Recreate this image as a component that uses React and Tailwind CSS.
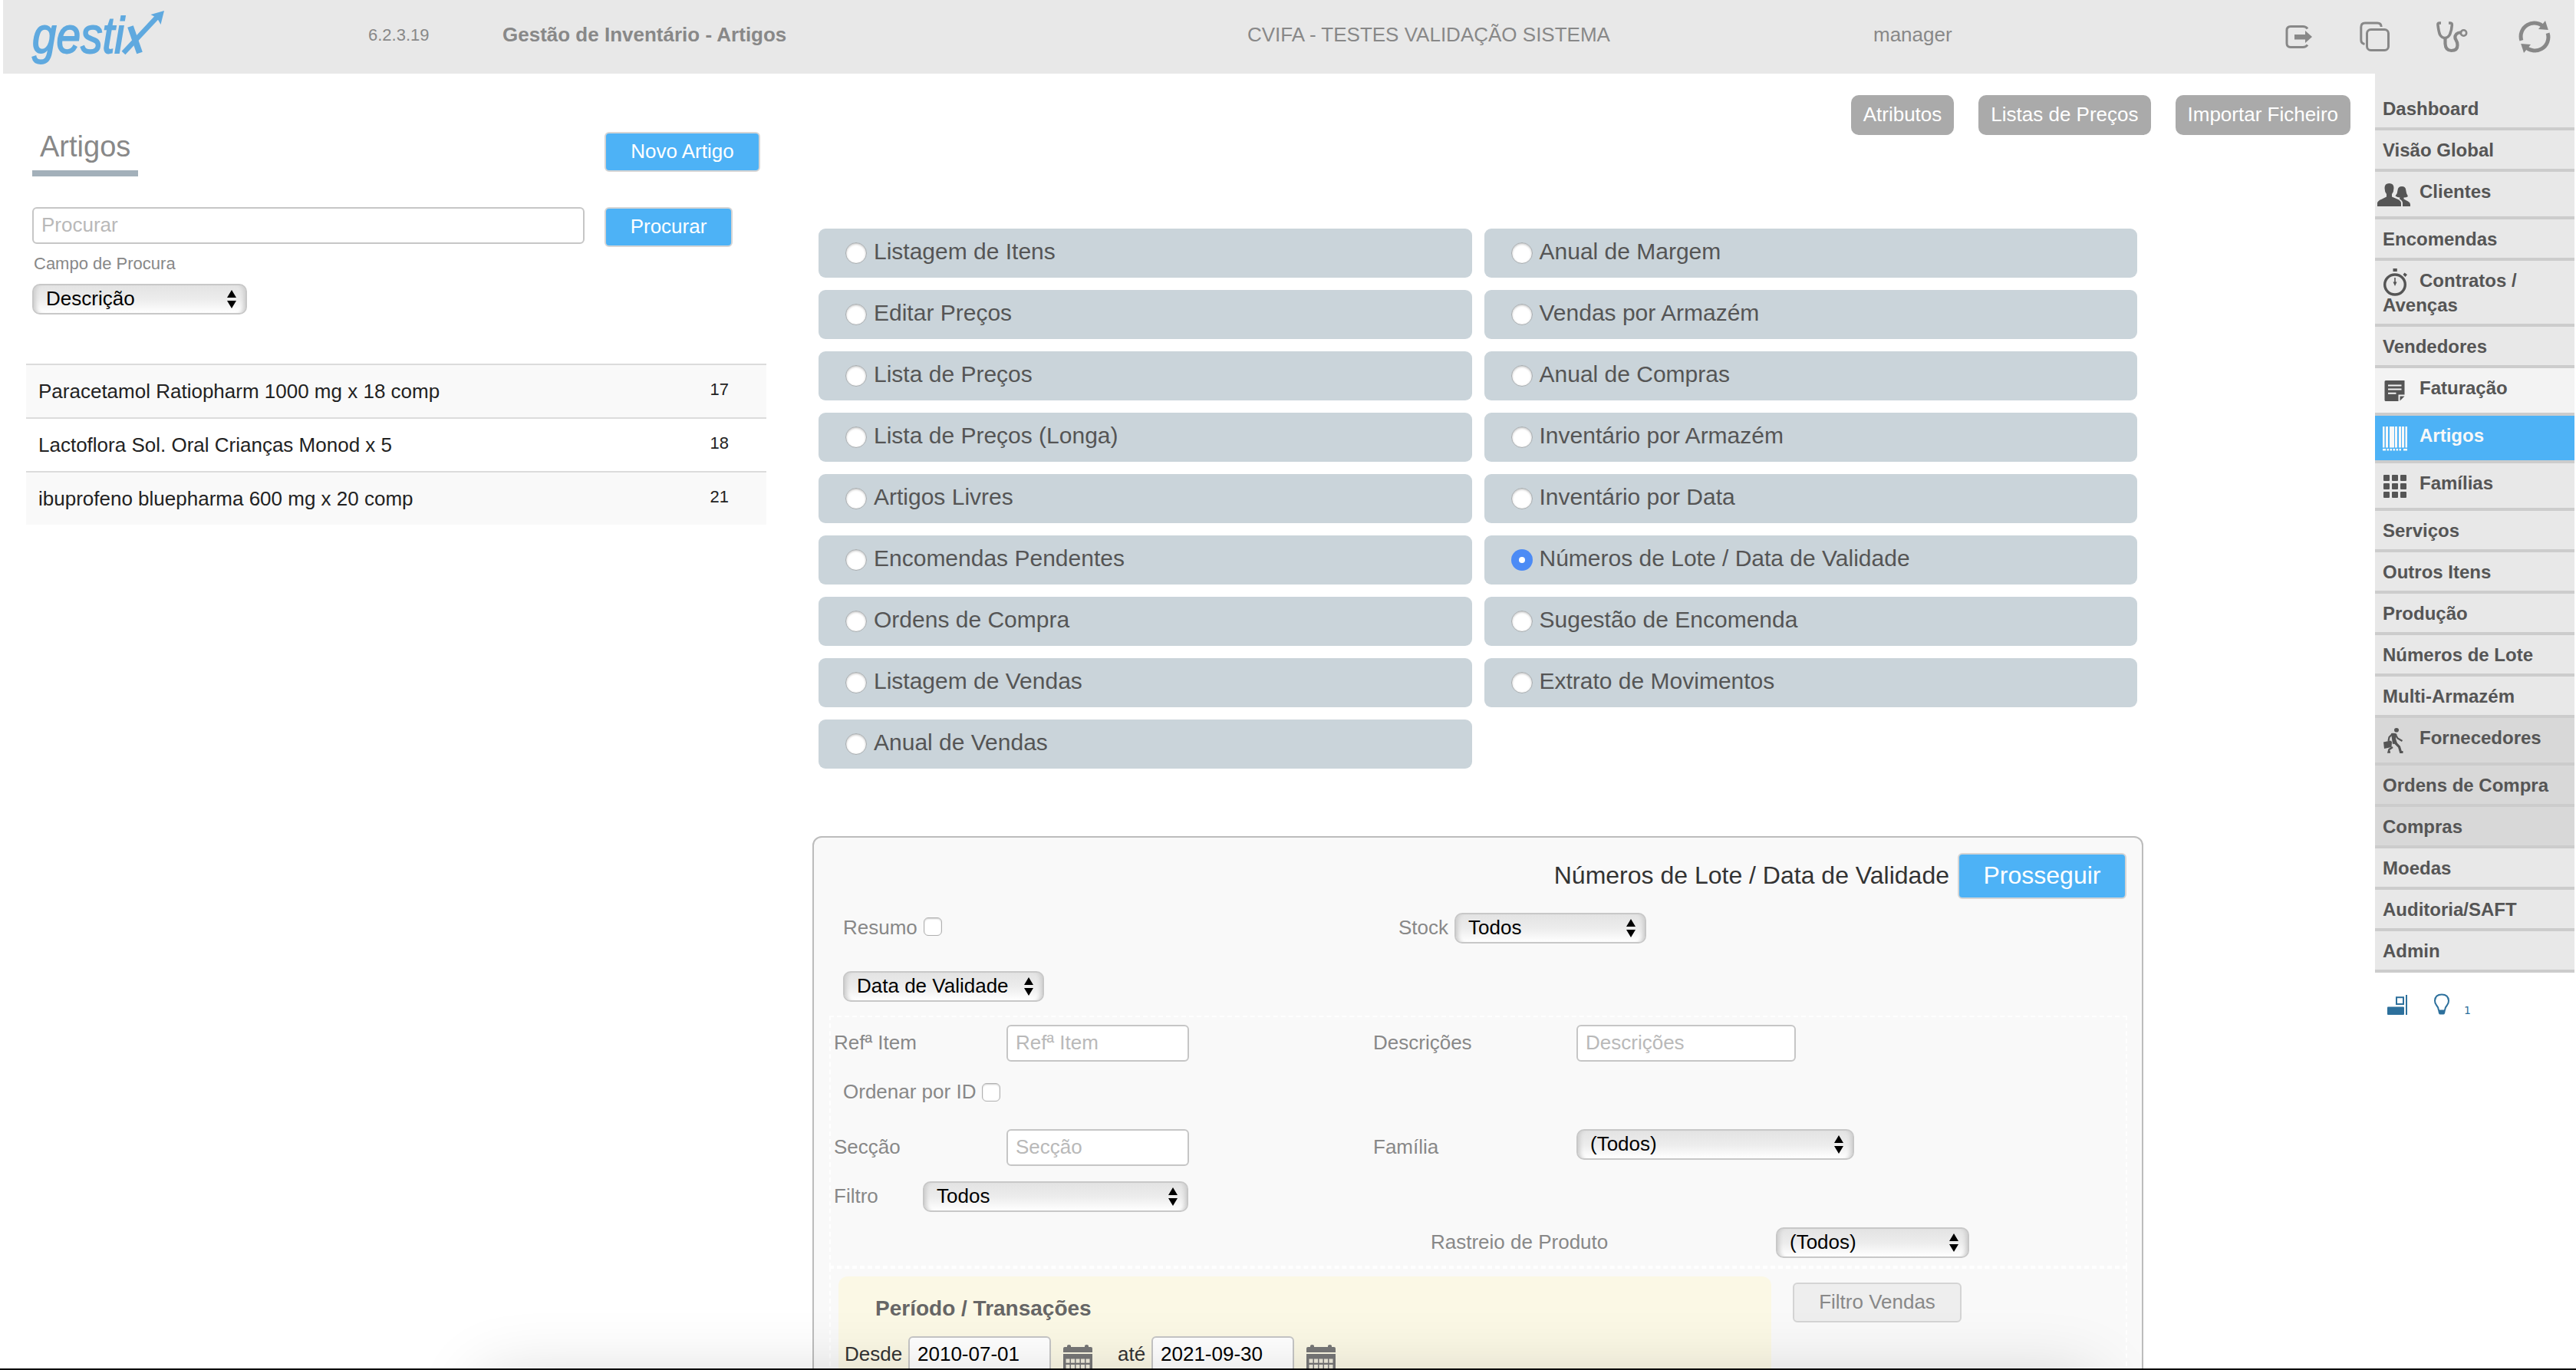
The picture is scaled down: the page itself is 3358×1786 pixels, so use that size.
import React, { useState } from "react";
import clsx from "clsx";

const leftReports = [
  "Listagem de Itens",
  "Editar Preços",
  "Lista de Preços",
  "Lista de Preços (Longa)",
  "Artigos Livres",
  "Encomendas Pendentes",
  "Ordens de Compra",
  "Listagem de Vendas",
  "Anual de Vendas",
];

const rightReports = [
  "Anual de Margem",
  "Vendas por Armazém",
  "Anual de Compras",
  "Inventário por Armazém",
  "Inventário por Data",
  "Números de Lote / Data de Validade",
  "Sugestão de Encomenda",
  "Extrato de Movimentos",
];

const articles = [
  { id: 17, name: "Paracetamol Ratiopharm 1000 mg x 18 comp" },
  { id: 18, name: "Lactoflora Sol. Oral Crianças Monod x 5" },
  { id: 21, name: "ibuprofeno bluepharma 600 mg x 20 comp" },
];

/* ---------- icons ---------- */

const Logo = () => (
  <svg width="196" height="96" viewBox="0 0 196 96" className="text-[#5fa9df]">
    <text
      transform="translate(18 69) scale(0.86 1)"
      fontFamily="'Liberation Sans', Arial, sans-serif"
      fontStyle="italic"
      fontSize="66"
      fill="currentColor"
      stroke="currentColor"
      strokeWidth="1.8"
    >
      gesti
    </text>
    <path d="M146 34.500L158 69" stroke="currentColor" strokeWidth="8" />
    <path d="M137 69L181 22" stroke="currentColor" strokeWidth="6.500" />
    <path d="M190 14L172.500 19L178 22L182.500 26.500L185.500 32Z" fill="currentColor" />
  </svg>
);

const LogoutIcon = () => (
  <svg width="36" height="32" viewBox="0 0 36 32" fill="none">
    <path
      d="M30 5.500Q28 2.500 24 2.500H8Q3 2.500 3 7.500V24.500Q3 29.500 8 29.500H24Q28 29.500 30 26.500"
      stroke="currentColor"
      strokeWidth="3"
    />
    <path d="M13 13H27V8L36 16L27 24V19.500H13Z" fill="currentColor" />
  </svg>
);

const CopyIcon = () => (
  <svg width="40" height="40" viewBox="0 0 40 40" fill="none" stroke="currentColor" strokeWidth="3">
    <path d="M6.500 29.500Q1.800 28.500 1.800 24V7.500Q1.800 2 7 2H23Q28 2 28.200 7" />
    <rect x="9.500" y="10.500" width="28" height="27" rx="5" />
  </svg>
);

const StethoscopeIcon = () => (
  <svg width="42" height="42" viewBox="0 0 42 42" fill="none" stroke="currentColor">
    <path
      d="M7 3H4.500Q2.500 3 3 6Q4 14 5.500 18Q8 22.500 12 22.500Q16 22.500 18.500 18Q21 12 21.300 6Q21.500 3 19.500 3H17"
      strokeWidth="3.600"
    />
    <path
      d="M12.500 22V30Q13 39 20.500 39Q28.500 39 28.500 32Q28.500 28 26.500 25Q24 21 27 17.500Q30 14.500 34 16"
      strokeWidth="4.200"
    />
    <circle cx="36.500" cy="16" r="3.700" strokeWidth="2.600" />
  </svg>
);

const RefreshIcon = () => (
  <svg width="42" height="42" viewBox="0 0 42 42" fill="none">
    <path d="M3.900 25.800A17.500 17.500 0 0 1 33.500 8.700" stroke="currentColor" strokeWidth="5" />
    <path d="M35 0L38.800 12L26 11Z" fill="currentColor" />
    <path d="M38.100 16.200A17.500 17.500 0 0 1 8.500 33.300" stroke="currentColor" strokeWidth="5" />
    <path d="M7 42L3.200 30L16 31Z" fill="currentColor" />
  </svg>
);

const PeopleIcon = () => (
  <svg width="43" height="30" viewBox="0 0 43 30" fill="currentColor">
    <path d="M0 30V25.500Q1 22.500 5 21L12 17.500V14Q9.500 11 9.500 6Q9.500 0 15.500 0Q21.500 0 21.500 6Q21.500 11 19 14V17.500L26 20.500Q31 22.500 31 26V30Z" />
    <path d="M33 30V26Q33 22.500 29 20.500L29.500 18.500Q26 18.500 23.500 16.500Q26.500 13 26.500 9Q27 4 32 4Q37 4 37.300 9Q37.500 13 40 17Q38 18.500 34.500 18.500V20.500L40 23.500Q43 25 43 27.500V30Z" />
  </svg>
);

const StopwatchIcon = () => (
  <svg width="34" height="37" viewBox="0 0 34 37" fill="none">
    <ellipse cx="16" cy="21" rx="13.300" ry="13" stroke="currentColor" strokeWidth="3.400" />
    <path d="M13.500 0H18.800V4H13.500ZM28.500 5.500L32 8L29.500 11L26.500 8Z" fill="currentColor" />
    <path d="M15.200 12H16.800V17.500H18.500L16 23L13.500 17.500H15.200Z" fill="currentColor" />
  </svg>
);

const NoteIcon = () => (
  <svg width="28" height="28" viewBox="0 0 28 28">
    <path
      fillRule="evenodd"
      fill="currentColor"
      d="M2 0H26.500V18.500H18.500V27H2Q.5 27 .5 25.500V1.500Q.5 0 2 0ZM5 5.500V7.500H22.500V5.500ZM5 10.500V12.500H22.500V10.500ZM5 15.800V17.800H15.500V15.800ZM20.500 20.500H26.500L20.500 26.500Z"
    />
  </svg>
);

const BarcodeIcon = () => (
  <svg width="32" height="32" viewBox="0 0 32 32" fill="currentColor">
    <path d="M0 0H2.500V27.500H0ZM4 0H7V27.500H4ZM9 0H15V27.500H9ZM16 0H19V27.500H16ZM21 0H24V27.500H21ZM25 0H28V27.500H25ZM29.500 0H32V27.500H29.500Z" />
    <path d="M0 29H4V31.500H0ZM5.500 29H8V31.500H5.500ZM9.500 29H12V31.500H9.500ZM13.500 29H16V31.500H13.500ZM17.500 29H20V31.500H17.500ZM21.500 29H24V31.500H21.500ZM27 29H32V31.500H27Z" />
  </svg>
);

const GridIcon = () => (
  <svg width="30" height="30" viewBox="0 0 30 30" fill="currentColor">
    {[0, 11, 22].map((y) =>
      [0, 11, 22].map((x) => <rect key={`${x}-${y}`} x={x} y={y} width="8" height="8" rx="1" />)
    )}
  </svg>
);

const CarrierIcon = () => (
  <svg width="26" height="33" viewBox="0 0 26 33" fill="none" stroke="currentColor">
    <ellipse cx="17" cy="2.800" rx="3" ry="2.800" fill="currentColor" stroke="none" />
    <path d="M0 18.500L9 16.500L11 18L10.500 25L1 27Z" fill="currentColor" stroke="none" />
    <path d="M10 7Q15 6 17.500 8L16 14L18 20L12 21L11 14Z" fill="currentColor" stroke="none" />
    <path d="M12 7.500L7.500 12L6.500 17" strokeWidth="2.200" />
    <path d="M16 9L18.500 13.500L24.500 17" strokeWidth="2.200" />
    <path d="M14.500 18.500L20.500 24.500L22.500 31.500H25.500" strokeWidth="3.200" />
    <path d="M12 25L7.500 28L6.500 31.500H9" strokeWidth="2.400" />
  </svg>
);

const RegisterIcon = () => (
  <svg width="26" height="26" viewBox="0 0 26 26" fill="currentColor">
    <rect x="0" y="15.500" width="22" height="10.500" rx="1" />
    <rect x="12" y="3.200" width="9" height="8.800" fill="none" stroke="currentColor" strokeWidth="2" />
    <rect x="24" y="0" width="2" height="26" />
  </svg>
);

const BulbIcon = () => (
  <svg width="22" height="28" viewBox="0 0 22 28">
    <path
      d="M7 22Q6.500 18 3.800 15Q2 12.500 2 9.500Q2.500 1.500 11 1.500Q19.500 1.500 20 9.500Q20 12.500 18.200 15Q15.500 18 15 22"
      fill="none"
      stroke="currentColor"
      strokeWidth="2"
    />
    <path d="M6 21.500H16L15 26Q14.500 27.500 13 27.500H9Q7.500 27.500 7 26Z" fill="currentColor" />
  </svg>
);

const CalendarIcon = () => (
  <svg width="38" height="38" viewBox="0 0 38 38">
    <path
      fill="currentColor"
      d="M0 10V5Q0 3 2 3H5V1.500Q5 0 7.500 0Q10 0 10 1.500V3H28V1.500Q28 0 30.500 0Q33 0 33 1.500V3H36Q38 3 38 5V10Z"
    />
    <path fill="currentColor" d="M0 12H38V38H0Z" />
    <g fill="#efecdc">
      {[18.5, 26, 33].map((y) =>
        [3.5, 10, 16.5, 23, 29.5].map((x) => (
          <rect key={`${x}-${y}`} x={x} y={y} width="5" height="5.200" />
        ))
      )}
    </g>
  </svg>
);

/* ---------- controls ---------- */

const Button = ({ children, className }) => (
  <button
    className={clsx(
      "shrink-0 rounded-md border-2 border-[#d5d5d5] bg-[#4db2f6] text-white whitespace-nowrap",
      className
    )}
  >
    {children}
  </button>
);

const ToolbarButton = ({ children }) => (
  <button className="h-[52px] px-4 pb-0.5 rounded-[10px] bg-[#aaaaaa] text-white text-[26px] whitespace-nowrap">
    {children}
  </button>
);

const Select = ({ value, className }) => (
  <div
    className={clsx(
      "shrink-0 h-10 flex items-center justify-between pl-4 pr-3 pb-px rounded-[10px] border-2 border-[#c8c8c8] bg-linear-to-b from-[#e3e3e3] via-[#ececec] to-white shadow-[inset_7px_0_5px_-4px_#cfcfcf,inset_-7px_0_5px_-4px_#cfcfcf] text-[26px] leading-[30px] text-black whitespace-nowrap",
      className
    )}
  >
    <span className="-mt-px">{value}</span>
    <svg width="12" height="24" viewBox="0 0 12 24">
      <path d="M6 0L12 10H0ZM6 24L0 14H12Z" />
    </svg>
  </div>
);

const Input = ({ className, ...rest }) => (
  <input
    type="text"
    className={clsx(
      "shrink-0 h-12 px-2.5 pb-0.5 rounded-md border-2 border-[#c6c6c6] bg-white text-[26px] text-black placeholder:text-[#b9b9b9]",
      className
    )}
    {...rest}
  />
);

const Label = ({ children, className }) => (
  <span className={clsx("shrink-0 text-[26px] leading-[30px] whitespace-nowrap", className)}>
    {children}
  </span>
);

const Checkbox = () => (
  <span className="shrink-0 size-6 rounded-[6px] border border-[#b0b0b0] bg-white shadow-[inset_0_1px_2px_#ccc]" />
);

const ReportOption = ({ label, checked, onSelect }) => (
  <div
    onClick={onSelect}
    className="h-16 flex items-start gap-[9px] pl-[35px] rounded-[9px] bg-[#cad4da] cursor-pointer"
  >
    <span
      className={clsx(
        "mt-[18px] size-7 rounded-full flex items-center justify-center",
        checked ? "bg-[#4c8bf5]" : "bg-white border border-[#a8adb0] shadow-[inset_0_1px_3px_#bbb]"
      )}
    >
      {checked && <span className="size-2 rounded-full bg-white" />}
    </span>
    <span className="mt-[13px] text-[30px] leading-[34px] text-[#555]">{label}</span>
  </div>
);

/* ---------- sidebar ---------- */

const menu = [
  { label: "Dashboard" },
  { label: "Visão Global" },
  { label: "Clientes", icon: <PeopleIcon />, iconClass: "-ml-[7px] mr-[12px] mt-[5px]" },
  { label: "Encomendas" },
  { label: "Contratos / Avenças", icon: <StopwatchIcon />, iconClass: "mr-[14px]" },
  { label: "Vendedores" },
  { label: "Faturação", icon: <NoteIcon />, iconClass: "ml-0.5 mr-[18px] mt-1.5", tone: "light" },
  { label: "Artigos", icon: <BarcodeIcon />, iconClass: "mr-4 mt-1", tone: "active" },
  { label: "Famílias", icon: <GridIcon />, iconClass: "ml-px mr-[17px] mt-[5px]" },
  { label: "Serviços" },
  { label: "Outros Itens" },
  { label: "Produção" },
  { label: "Números de Lote" },
  { label: "Multi-Armazém" },
  { label: "Fornecedores", icon: <CarrierIcon />, iconClass: "ml-px mr-[21px] mt-[3px]", tone: "dark" },
  { label: "Ordens de Compra", tone: "dark" },
  { label: "Compras", tone: "dark" },
  { label: "Moedas" },
  { label: "Auditoria/SAFT" },
  { label: "Admin" },
];

const MenuItem = ({ item }) => (
  <a
    className={clsx(
      "block pt-2.5 px-2.5 border-b-4 border-[#cccccc] text-2xl leading-8 font-bold",
      item.icon ? "min-h-[62px] pb-2" : "h-[54px]",
      item.tone === "active" && "bg-[#4db2f6] text-[#f8f8f8]",
      item.tone === "light" && "bg-[#f3f3f3] text-[#555]",
      item.tone === "dark" && "bg-[#d8d8d8] text-[#555]",
      !item.tone && "bg-[#e8e8e8] text-[#555]"
    )}
  >
    {item.icon && (
      <span className={clsx("inline-block h-8 align-top overflow-visible", item.iconClass)}>
        {item.icon}
      </span>
    )}
    {item.label}
  </a>
);

const Sidebar = () => (
  <nav className="w-[260px] shrink-0">
    <div className="h-5 bg-[#e8e8e8]" />
    {menu.map((item) => (
      <MenuItem key={item.label} item={item} />
    ))}
    <div className="flex items-end pt-[27px] pl-4 text-[#2d709c]">
      <RegisterIcon />
      <span className="ml-[34px]">
        <BulbIcon />
      </span>
      <span className="ml-[18px] font-['DejaVu_Sans',sans-serif] text-[14px] leading-3">1</span>
    </div>
  </nav>
);

/* ---------- page parts ---------- */

const Header = () => (
  <header className="h-24 ml-1 mr-0.5 flex bg-[#e8e8e8] text-[#888]">
    <div className="w-[476px] pl-[20px]">
      <Logo />
    </div>
    <span className="w-[175px] mt-[33px] text-[22px] leading-[26px]">6.2.3.19</span>
    <span className="w-[971px] mt-[30px] text-[26px] leading-[30px] font-bold">
      Gestão de Inventário - Artigos
    </span>
    <span className="w-[816px] mt-[30px] text-[26px] leading-[30px]">
      CVIFA - TESTES VALIDAÇÃO SISTEMA
    </span>
    <span className="w-[536px] mt-[30px] text-[26px] leading-[30px]">manager</span>
    <div className="flex items-center">
      <span className="mr-[62px]">
        <LogoutIcon />
      </span>
      <span className="mr-[59px]">
        <CopyIcon />
      </span>
      <span className="mr-[66px]">
        <StethoscopeIcon />
      </span>
      <RefreshIcon />
    </div>
  </header>
);

const ArticlesPanel = () => (
  <section className="w-[1059px] shrink-0">
    <div className="flex pl-[42px] pt-[73px]">
      <h1 className="w-[138px] h-[61px] pl-2.5 border-b-8 border-[#a3b0ba] text-[38px] leading-[44px] text-[#888]">
        Artigos
      </h1>
      <Button className="ml-[608px] mt-[3px] w-[203px] h-[52px] pb-0.5 text-[26px]">
        Novo Artigo
      </Button>
    </div>
    <div className="flex pl-[42px] mt-10 gap-[26px]">
      <Input placeholder="Procurar" className="w-[720px]" />
      <Button className="w-[167px] h-[52px] pb-0.5 text-[26px]">Procurar</Button>
    </div>
    <p className="pl-11 mt-[9px] text-[22px] leading-[26px] text-[#888]">Campo de Procura</p>
    <Select value="Descrição" className="ml-[42px] mt-[13px] w-[280px]" />
    <div className="ml-[34px] mt-16 w-[965px]">
      {articles.map((article) => (
        <div
          key={article.id}
          className="h-[70px] flex items-center justify-between pl-4 pr-[49px] border-t-2 border-[#dcdcdc] odd:bg-[#f9f9f9] text-[#222]"
        >
          <span className="text-[26px] leading-[30px]">{article.name}</span>
          <span className="pb-[5px] text-[22px] leading-[26px]">{article.id}</span>
        </div>
      ))}
    </div>
  </section>
);

const FilterPanel = ({ title }) => (
  <div className="mt-[88px] w-[1735px] h-[760px] border-2 border-[#bcbcbc] rounded-[12px] bg-[#f9f9f9] text-[#888]">
    <div className="flex justify-end items-center gap-[11px] pt-5 pr-5">
      <h2 className="pb-0.5 text-[32px] leading-9 text-[#333]">{title}</h2>
      <Button className="w-[220px] h-[60px] pb-0.5 text-[32px]">Prosseguir</Button>
    </div>
    <div className="flex items-center h-10 mt-[18px] pl-[38px]">
      <Label className="w-[105px] pb-0.5">Resumo</Label>
      <span className="flex -mt-1">
        <Checkbox />
      </span>
      <Label className="ml-[595px] w-[73px] pb-0.5">Stock</Label>
      <Select value="Todos" className="w-[250px]" />
    </div>
    <Select value="Data de Validade" className="ml-[38px] mt-9 w-[262px]" />

    <div className="ml-5 mt-[18px] w-[1692px] border-2 border-dashed border-white pt-2.5 pb-2.5">
      <div className="flex items-center h-12 pl-1">
        <Label className="w-[225px] pb-0.5">Refª Item</Label>
        <Input placeholder="Refª Item" className="w-[238px]" />
        <Label className="ml-[240px] w-[265px] pb-0.5">Descrições</Label>
        <Input placeholder="Descrições" className="w-[286px]" />
      </div>
      <div className="flex items-center h-6 mt-7 pl-4">
        <Label className="w-[181px] pb-0.5">Ordenar por ID</Label>
        <Checkbox />
      </div>
      <div className="flex items-center h-12 mt-9 pl-1">
        <Label className="w-[225px] pb-0.5">Secção</Label>
        <Input placeholder="Secção" className="w-[238px]" />
        <Label className="ml-[240px] w-[265px] pb-0.5">Família</Label>
        <Select value="(Todos)" className="w-[362px] self-start" />
      </div>
      <div className="flex items-center h-10 mt-5 pl-1">
        <Label className="w-[116px] pb-0.5">Filtro</Label>
        <Select value="Todos" className="w-[346px]" />
      </div>
      <div className="flex items-center h-10 mt-5 pl-[782px]">
        <Label className="w-[450px] pb-0.5">Rastreio de Produto</Label>
        <Select value="(Todos)" className="w-[252px]" />
      </div>
    </div>

    <div className="ml-5 w-[1692px] h-[180px] border-2 border-dashed border-white flex items-start pt-2.5 pl-2.5">
      <div className="w-[1216px] h-[160px] pt-[26px] rounded-[12px] bg-[#fbf8e5] text-[#333]">
        <h3 className="pl-12 text-[28px] leading-8 font-bold text-[#666]">
          Período / Transações
        </h3>
        <div className="flex items-center h-12 mt-5 pl-2">
          <Label className="w-[83px] pb-0.5">Desde</Label>
          <Input defaultValue="2010-07-01" className="w-[186px]" />
          <span className="ml-4 mt-3 text-[#777]">
            <CalendarIcon />
          </span>
          <Label className="ml-[33px] w-[44px] pb-0.5">até</Label>
          <Input defaultValue="2021-09-30" className="w-[186px]" />
          <span className="ml-4 mt-3 text-[#777]">
            <CalendarIcon />
          </span>
        </div>
      </div>
      <button className="ml-7 mt-2 w-[220px] h-[52px] pb-0.5 rounded-md border-2 border-[#d4d4d4] bg-[#eeeeee] text-[26px] text-[#888]">
        Filtro Vendas
      </button>
    </div>
  </div>
);

const App = () => {
  const [report, setReport] = useState("Números de Lote / Data de Validade");

  const renderReport = (label) => (
    <ReportOption
      key={label}
      label={label}
      checked={label === report}
      onSelect={() => setReport(label)}
    />
  );

  return (
    <div className="relative w-[3358px] h-[1786px] overflow-hidden bg-white font-['Liberation_Sans',Arial,sans-serif]">
      <Header />
      <div className="flex">
        <ArticlesPanel />
        <main className="w-[2037px] shrink-0">
          <div className="flex justify-end gap-8 pt-7 pr-8">
            <ToolbarButton>Atributos</ToolbarButton>
            <ToolbarButton>Listas de Preços</ToolbarButton>
            <ToolbarButton>Importar Ficheiro</ToolbarButton>
          </div>
          <div className="grid grid-cols-2 gap-4 w-[1719px] ml-2 mt-[122px]">
            <div className="flex flex-col gap-4">{leftReports.map(renderReport)}</div>
            <div className="flex flex-col gap-4">{rightReports.map(renderReport)}</div>
          </div>
          <FilterPanel title={report} />
        </main>
        <Sidebar />
      </div>

      {/* dock shadow and screen edge */}
      <div className="absolute left-[640px] top-[1806px] w-[2080px] h-[100px] shadow-[0_0_90px_10px_rgba(0,0,0,0.16)] pointer-events-none" />
      <div className="absolute left-0 bottom-0 w-full h-0.5 bg-black" />
    </div>
  );
};

export default App;
